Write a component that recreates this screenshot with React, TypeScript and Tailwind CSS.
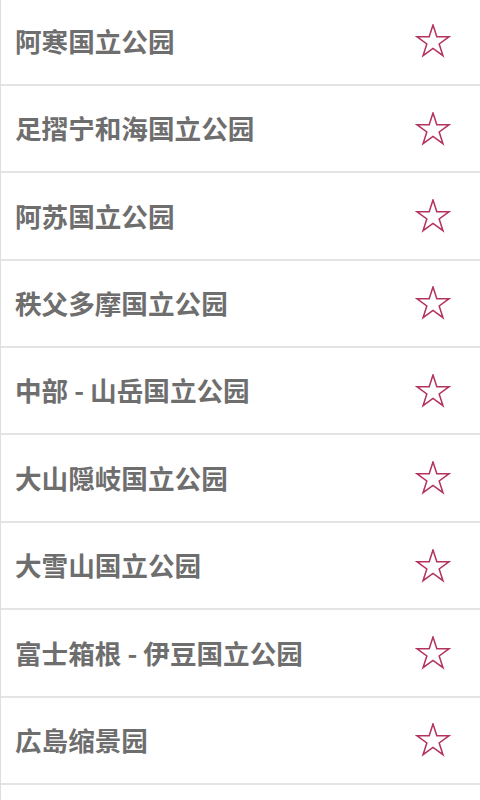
import * as React from "react";

const parks = [
  "阿寒国立公园",
  "足摺宁和海国立公园",
  "阿苏国立公园",
  "秩父多摩国立公园",
  "中部 - 山岳国立公园",
  "大山隠岐国立公园",
  "大雪山国立公园",
  "富士箱根 - 伊豆国立公园",
  "広島缩景园",
];

function StarOutline() {
  return (
    <svg width="36" height="34" viewBox="-1 -1 38 36" fill="none">
      <polygon
        points="18,0 22.04,12.43 35.12,12.44 24.54,20.13 28.58,32.56 18,24.88 7.42,32.56 11.46,20.13 0.88,12.44 13.96,12.43"
        stroke="#b3325f"
        strokeWidth="1.6"
        strokeLinejoin="miter"
      />
    </svg>
  );
}

export default function App() {
  return (
    <div className="w-[480px] h-[800px] overflow-hidden bg-white border-l border-[#dedede]">
      <div className="-mt-[1.5px]">
        {parks.map((name) => (
          <div
            key={name}
            className="flex h-[87.4px] items-center justify-between border-b-2 border-[#e4e4e4] pl-[14px] pr-[29px]"
          >
            <span
              className="text-[26.6px] font-bold text-[#6e6e6e] leading-none"
              style={{ fontFamily: '"Noto Sans CJK SC", "Noto Sans", sans-serif' }}
            >
              {name}
            </span>
            <StarOutline />
          </div>
        ))}
      </div>
    </div>
  );
}
